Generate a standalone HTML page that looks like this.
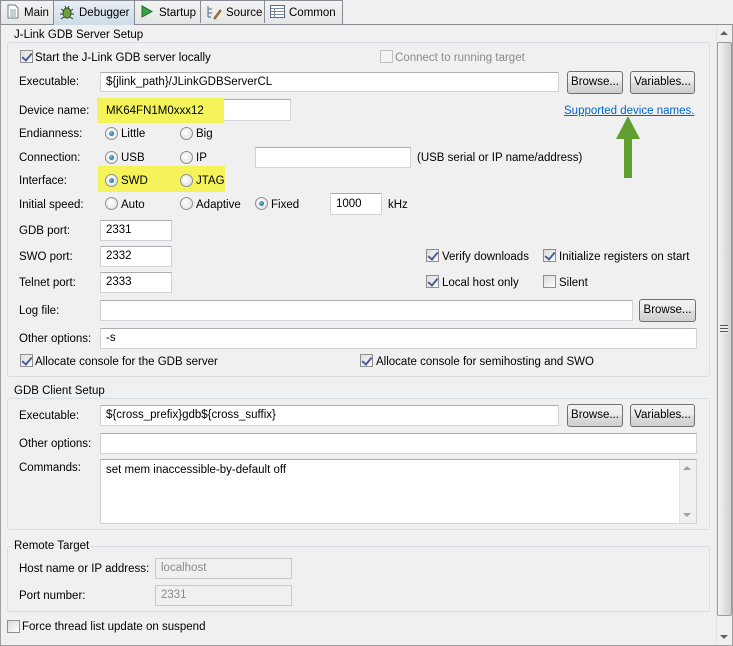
<!DOCTYPE html>
<html><head><meta charset="utf-8"><style>
*{box-sizing:border-box;margin:0;padding:0}
body{width:733px;height:646px;background:#f0f0f0;font-family:"Liberation Sans",sans-serif;font-size:11.5px;color:#000;position:relative;overflow:hidden}
.a{position:absolute;white-space:nowrap;line-height:16px}
.in{position:absolute;background:#fff;border:1px solid #d0d3d8;border-top-color:#abadb3;padding:0 5px;line-height:18px;font-size:11.5px;white-space:nowrap}
.dis{background:#f0f0f0;color:#8a8a8a;border-color:#c8c8c8}
.btn{position:absolute;border:1px solid #707070;border-radius:3px;background:linear-gradient(#f2f2f2,#ebebeb 50%,#dddddd 51%,#cfcfcf);text-align:center;line-height:20px}
.grp{position:absolute;border:1px solid #d5dfe5;border-radius:3px}
.gt{position:absolute;background:#f0f0f0;padding:0 2px;line-height:14px}
.cb{position:absolute;width:13px;height:13px;border:1px solid #8e8f8f;background:linear-gradient(135deg,#dcdcdc,#fbfbfb);}
.cb.on::after{content:"";position:absolute;left:3px;top:0px;width:4px;height:8px;border:solid #4a5f97;border-width:0 2px 2px 0;transform:rotate(40deg)}
.cb.dim{border-color:#c0c0c0;background:#f4f4f4}
.rb{position:absolute;width:13px;height:13px;border:1px solid #8e8f8f;border-radius:50%;background:radial-gradient(circle at 40% 40%,#fff,#dcdcdc)}
.rb.on::after{content:"";position:absolute;left:3px;top:3px;width:5px;height:5px;border-radius:50%;background:radial-gradient(circle at 35% 35%,#6ec2e0,#14506e)}
.hl{position:absolute;background:#f5f35a}
</style></head><body>
<div style="position:absolute;left:0;top:24px;width:733px;height:622px;border:1px solid #a0a0a0;border-top:1px solid #898c95"></div>
<div style="position:absolute;left:0;top:0;width:343px;height:24px;border:1px solid #898c95;border-bottom:none;background:linear-gradient(#f3f3f3,#e5e5e5)"></div>
<div style="position:absolute;left:53px;top:0;width:82px;height:25px;border:1px solid #898c95;border-bottom:none;background:linear-gradient(#e8eef5,#cddbe8)"></div>
<div style="position:absolute;left:200px;top:1px;width:1px;height:22px;background:#898c95"></div>
<div style="position:absolute;left:264px;top:1px;width:1px;height:22px;background:#898c95"></div>
<svg style="position:absolute;left:7px;top:4px" width="12" height="15"><path d="M1 1h7l3 3v10H1z" fill="#fff" stroke="#6a7a8a"/><path d="M3 6h6M3 8h6M3 10h6M3 12h6" stroke="#8a9aaa"/></svg>
<span class="a" style="left:24px;top:5px">Main</span>
<svg style="position:absolute;left:59px;top:4px" width="16" height="16"><ellipse cx="8" cy="9" rx="4" ry="5" fill="#6ca23c" stroke="#2e5a1a"/><path d="M2 5l3 2M14 5l-3 2M1 10h3M15 10h-3M2 15l3-2M14 15l-3-2M6 2l1 2M10 2l-1 2" stroke="#333"/></svg>
<span class="a" style="left:79px;top:5px">Debugger</span>
<svg style="position:absolute;left:141px;top:5px" width="12" height="13"><path d="M1 1l10 5.5L1 12z" fill="#3aa04a" stroke="#1f6e2a"/></svg>
<span class="a" style="left:159px;top:5px">Startup</span>
<svg style="position:absolute;left:206px;top:4px" width="16" height="16"><path d="M2 2v11M2 5h4M2 9h4M2 13h3" stroke="#4a6a8a"/><path d="M8 14l6-8 1 1-6 8z" fill="#d9a441" stroke="#7a5a20"/></svg>
<span class="a" style="left:226px;top:5px">Source</span>
<svg style="position:absolute;left:270px;top:5px" width="15" height="13"><rect x=".5" y=".5" width="14" height="12" fill="#fff" stroke="#5a6a80"/><path d="M.5 3.5h14M4.5 3v10M1 6.5h13M1 9.5h13" stroke="#7a8aa0"/></svg>
<span class="a" style="left:289px;top:5px">Common</span>

<div style="position:absolute;left:716px;top:25px;width:16px;height:620px;background:#f0f0f0;border-left:1px solid #e5e5e5"></div>
<svg style="position:absolute;left:719px;top:29px" width="10" height="8"><path d="M1 6l4-4 4 4z" fill="#606060"/></svg>
<div style="position:absolute;left:717px;top:42px;width:15px;height:574px;border:1px solid #9a9a9a;border-radius:2px;background:linear-gradient(90deg,#f3f3f3,#e2e2e2 50%,#cfcfcf)"></div>
<div style="position:absolute;left:720px;top:325px;width:8px;height:8px;background:repeating-linear-gradient(#555 0 1px,#eee 1px 3px)"></div>
<svg style="position:absolute;left:719px;top:633px" width="10" height="8"><path d="M1 2l4 4 4-4z" fill="#606060"/></svg>

<div class="grp" style="left:7px;top:42px;width:703px;height:335px"></div>
<span class="gt a" style="left:12px;top:28px">J-Link GDB Server Setup</span>
<div class="cb on" style="left:20px;top:50px"></div><span class="a" style="left:35px;top:50px">Start the J-Link GDB server locally</span>
<div class="cb dim" style="left:380px;top:50px"></div><span class="a" style="left:395px;top:50px;color:#8a8a8a">Connect to running target</span>

<span class="a" style="left:19px;top:74px">Executable:</span>
<div class="in" style="left:100px;top:72px;width:459px;height:20px">${jlink_path}/JLinkGDBServerCL</div>
<div class="btn" style="left:567px;top:71px;width:56px;height:23px">Browse...</div>
<div class="btn" style="left:630px;top:71px;width:65px;height:23px">Variables...</div>

<span class="a" style="left:19px;top:103px">Device name:</span>
<div class="in" style="left:100px;top:99px;width:191px;height:22px"></div>
<div class="hl" style="left:97px;top:98px;width:127px;height:25px"></div>
<span class="a" style="left:106px;top:103px">MK64FN1M0xxx12</span>
<span class="a" style="left:564px;top:103px;color:#0066cc;text-decoration:underline">Supported device names.</span>
<svg style="position:absolute;left:614px;top:114px" width="30" height="64"><path d="M14 2L2 25h8v50h8V25h8z" fill="#5f9e2f"/></svg>

<span class="a" style="left:19px;top:126px">Endianness:</span>
<div class="rb on" style="left:105px;top:127px"></div><span class="a" style="left:121px;top:126px">Little</span>
<div class="rb" style="left:180px;top:127px"></div><span class="a" style="left:196px;top:126px">Big</span>

<span class="a" style="left:19px;top:150px">Connection:</span>
<div class="rb on" style="left:105px;top:151px"></div><span class="a" style="left:121px;top:150px">USB</span>
<div class="rb" style="left:180px;top:151px"></div><span class="a" style="left:196px;top:150px">IP</span>
<div class="in" style="left:255px;top:147px;width:156px;height:21px"></div>
<span class="a" style="left:417px;top:150px">(USB serial or IP name/address)</span>

<span class="a" style="left:19px;top:173px">Interface:</span>
<div class="hl" style="left:98px;top:166px;width:127px;height:26px"></div>
<div class="rb on" style="left:105px;top:174px"></div><span class="a" style="left:121px;top:173px">SWD</span>
<div class="rb" style="left:180px;top:174px"></div><span class="a" style="left:196px;top:173px">JTAG</span>

<span class="a" style="left:19px;top:197px">Initial speed:</span>
<div class="rb" style="left:105px;top:197px"></div><span class="a" style="left:121px;top:197px">Auto</span>
<div class="rb" style="left:180px;top:197px"></div><span class="a" style="left:196px;top:197px">Adaptive</span>
<div class="rb on" style="left:255px;top:197px"></div><span class="a" style="left:271px;top:197px">Fixed</span>
<div class="in" style="left:330px;top:193px;width:52px;height:22px;line-height:20px">1000</div>
<span class="a" style="left:388px;top:197px">kHz</span>

<span class="a" style="left:19px;top:223px">GDB port:</span>
<div class="in" style="left:100px;top:220px;width:72px;height:21px">2331</div>
<span class="a" style="left:19px;top:249px">SWO port:</span>
<div class="in" style="left:100px;top:246px;width:72px;height:21px">2332</div>
<span class="a" style="left:19px;top:275px">Telnet port:</span>
<div class="in" style="left:100px;top:272px;width:72px;height:21px">2333</div>

<div class="cb on" style="left:426px;top:249px"></div><span class="a" style="left:442px;top:249px">Verify downloads</span>
<div class="cb on" style="left:543px;top:249px"></div><span class="a" style="left:559px;top:249px">Initialize registers on start</span>
<div class="cb on" style="left:426px;top:275px"></div><span class="a" style="left:442px;top:275px">Local host only</span>
<div class="cb" style="left:543px;top:275px"></div><span class="a" style="left:559px;top:275px">Silent</span>

<span class="a" style="left:19px;top:303px">Log file:</span>
<div class="in" style="left:100px;top:300px;width:533px;height:21px"></div>
<div class="btn" style="left:639px;top:299px;width:57px;height:23px">Browse...</div>

<span class="a" style="left:19px;top:331px">Other options:</span>
<div class="in" style="left:100px;top:328px;width:597px;height:21px">-s</div>

<div class="cb on" style="left:20px;top:354px"></div><span class="a" style="left:35px;top:354px">Allocate console for the GDB server</span>
<div class="cb on" style="left:360px;top:354px"></div><span class="a" style="left:376px;top:354px">Allocate console for semihosting and SWO</span>

<div class="grp" style="left:7px;top:398px;width:703px;height:132px"></div>
<span class="gt a" style="left:12px;top:384px">GDB Client Setup</span>
<span class="a" style="left:19px;top:408px">Executable:</span>
<div class="in" style="left:100px;top:405px;width:459px;height:21px">${cross_prefix}gdb${cross_suffix}</div>
<div class="btn" style="left:567px;top:404px;width:56px;height:23px">Browse...</div>
<div class="btn" style="left:630px;top:404px;width:65px;height:23px">Variables...</div>
<span class="a" style="left:19px;top:436px">Other options:</span>
<div class="in" style="left:100px;top:433px;width:597px;height:21px"></div>
<span class="a" style="left:19px;top:460px">Commands:</span>
<div class="in" style="left:100px;top:459px;width:597px;height:65px;line-height:20px">set mem inaccessible-by-default off</div>
<div style="position:absolute;left:679px;top:460px;width:17px;height:63px;background:#f0f0f0;border-left:1px solid #e3e3e3"></div>
<svg style="position:absolute;left:682px;top:465px" width="10" height="6"><path d="M1 5l4-4 4 4z" fill="#a0a0a0"/></svg>
<svg style="position:absolute;left:682px;top:512px" width="10" height="6"><path d="M1 1l4 4 4-4z" fill="#a0a0a0"/></svg>

<div class="grp" style="left:7px;top:546px;width:703px;height:66px"></div>
<span class="gt a" style="left:12px;top:539px">Remote Target</span>
<span class="a" style="left:19px;top:561px">Host name or IP address:</span>
<div class="in dis" style="left:155px;top:558px;width:137px;height:21px">localhost</div>
<span class="a" style="left:19px;top:588px">Port number:</span>
<div class="in dis" style="left:155px;top:585px;width:137px;height:21px">2331</div>

<div class="cb" style="left:7px;top:620px"></div><span class="a" style="left:22px;top:619px">Force thread list update on suspend</span>
</body></html>
